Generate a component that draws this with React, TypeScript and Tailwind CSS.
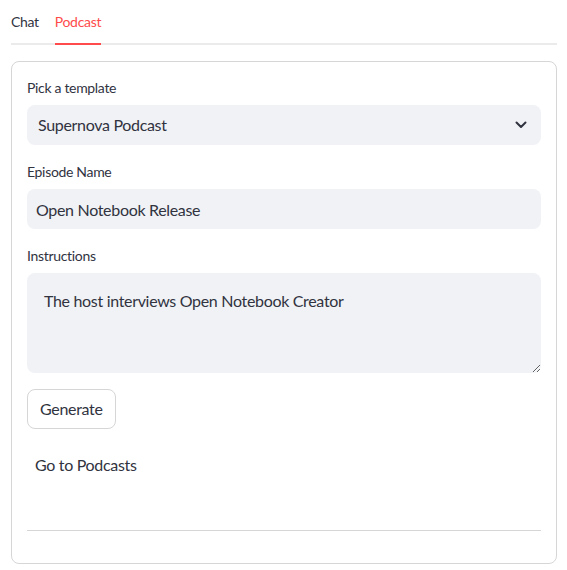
import React from "react";

const font = { fontFamily: '"Source Sans Pro", Lato, "Noto Sans", sans-serif' };

const Label = ({ children }: { children: React.ReactNode }) => (
  <div className="mb-1 h-6 text-[14px] leading-[22px] text-[#31333f]">{children}</div>
);

export default function App() {
  return (
    <div
      className="min-h-[570px] bg-white pl-[11px] pr-[10px] tracking-[-0.02em] text-[#31333f]"
      style={font}
    >
      <div className="relative flex h-[45px] gap-4 border-b-2 border-[#ebebeb]">
        <div className="flex items-center text-[14px]">Chat</div>
        <div className="relative flex items-center text-[14px] text-[#ff4b4b]">
          Podcast
          <div className="absolute -bottom-[2px] left-0 right-0 h-[2px] bg-[#ff4b4b]" />
        </div>
      </div>

      <div className="mt-4 flex flex-col gap-4 rounded-lg border border-[#d6d6d9] p-[15px]">
        <div>
          <Label>Pick a template</Label>
          <div className="flex h-10 items-center justify-between rounded-lg bg-[#f0f2f6] pl-[11px] pr-[14px] text-[16px]">
            <span>Supernova Podcast</span>
            <svg width="12" height="8" viewBox="0 0 12 8" fill="none">
              <path d="M1.5 1.5 6 6l4.5-4.5" stroke="#31333f" strokeWidth="2" strokeLinecap="round" strokeLinejoin="round" />
            </svg>
          </div>
        </div>

        <div>
          <Label>Episode Name</Label>
          <input
            defaultValue="Open Notebook Release"
            className="h-10 w-full rounded-lg bg-[#f0f2f6] px-[9px] text-[16px] outline-none"
          />
        </div>

        <div>
          <Label>Instructions</Label>
          <textarea
            defaultValue="The host interviews Open Notebook Creator"
            className="block h-[100px] w-full resize-y rounded-lg bg-[#f0f2f6] px-[17px] py-[15px] text-[16px] leading-[1.6] outline-none"
          />
        </div>

        <div>
          <button className="h-10 rounded-lg border border-[#d6d6d9] bg-white px-3 text-[16px]">
            Generate
          </button>
        </div>

        <div className="flex h-10 items-center px-2 text-[16px]">Go to Podcasts</div>

        <div className="mt-[29px] mb-[17px] border-t border-[#d6d6d9]" />
      </div>
    </div>
  );
}
